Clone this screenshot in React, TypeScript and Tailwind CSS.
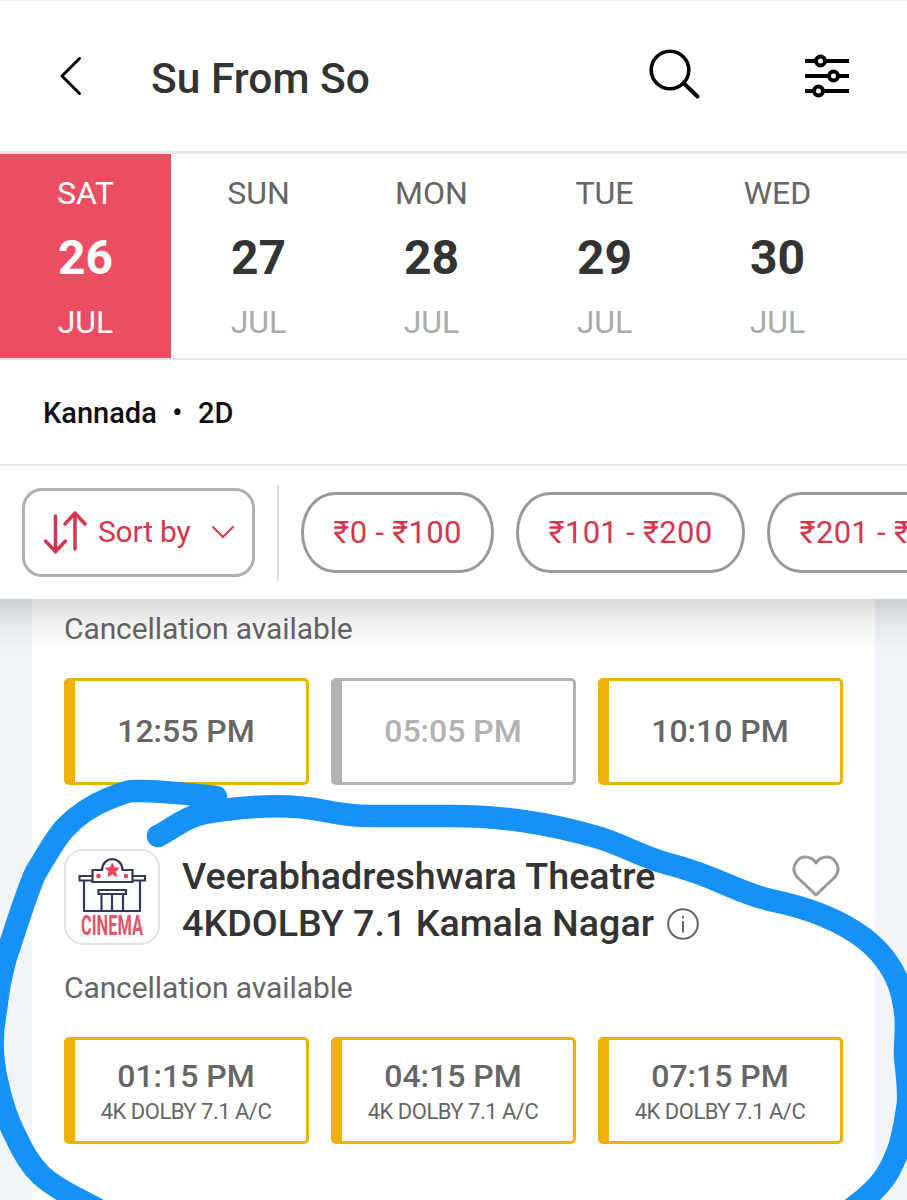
const days = [
  { day: "SAT", date: "26", month: "JUL" },
  { day: "SUN", date: "27", month: "JUL" },
  { day: "MON", date: "28", month: "JUL" },
  { day: "TUE", date: "29", month: "JUL" },
  { day: "WED", date: "30", month: "JUL" },
];

const prices = [
  { label: "₹0 - ₹100", width: "w-[193px]" },
  { label: "₹101 - ₹200", width: "w-[229px]" },
  { label: "₹201 - ₹300", width: "w-[229px]" },
];

const Header = () => {
  return (
    <header className="flex h-[154px] items-center border-t border-b-[3px] border-t-[#f0f0f0] border-b-[#e6e6e6]">
      <svg className="ml-[58px] h-[44px] w-[26px]" viewBox="0 0 26 44" fill="none" stroke="#000" strokeWidth="3" strokeLinecap="round" strokeLinejoin="round">
        <path d="M21.500 4.500L4 22L21.500 39.500" />
      </svg>
      <h1 className="mt-[7px] ml-[67px] text-[42.500px] leading-none font-medium text-[#333]">Su From So</h1>
      <svg className="mr-[104px] mb-[5px] ml-auto h-[54px] w-[54px]" viewBox="0 0 54 54" fill="none" stroke="#000">
        <circle cx="23" cy="23" r="18.800" strokeWidth="3.600" />
        <path d="M36.500 36L50.500 49.500" strokeWidth="4" strokeLinecap="round" />
      </svg>
      <svg className="mr-[58px] h-[46px] w-[44px]" viewBox="0 0 44 46" fill="#fff" stroke="#000" strokeWidth="4">
        <path d="M0 8H44M0 23H44M0 38H44" />
        <circle cx="15.500" cy="8" r="4.500" />
        <circle cx="28.500" cy="23" r="4.500" />
        <circle cx="13.500" cy="38" r="4.500" />
      </svg>
    </header>
  );
};

const DateStrip = () => {
  return (
    <div className="flex h-[206px] border-b-2 border-[#e4e4e4]">
      {days.map((d, i) => (
        <div
          key={d.date}
          className={`mr-[2px] flex h-[203.500px] w-[171px] shrink-0 flex-col items-center pt-[19px] leading-[40px] ${i === 0 ? "bg-[#eb4e62] text-white" : "text-[#666]"}`}
        >
          <p className="text-[32px]">{d.day}</p>
          <p className={`mt-[19px] text-[48px] leading-[52px] font-bold ${i === 0 ? "" : "text-[#333]"}`}>{d.date}</p>
          <p className={`mt-[18px] text-[32px] ${i === 0 ? "" : "text-[#aaa]"}`}>{d.month}</p>
        </div>
      ))}
    </div>
  );
};

const Filters = () => {
  return (
    <div className="flex h-[133px] items-center overflow-hidden">
      <button className="ml-[22px] flex h-[89px] w-[233px] shrink-0 items-center rounded-[20px] border-[3px] border-[#b0b0b0] pb-[2px] pl-[17px] text-[#d3374e]">
        <svg className="h-[46px] w-[46px]" viewBox="0 0 46 46" fill="none" stroke="currentColor" strokeWidth="3.500" strokeLinecap="round" strokeLinejoin="round">
          <path d="M13.500 7V43M3.500 32L13.500 42.500L23.500 32M33 40V4M23 15L33 4L43 15" />
        </svg>
        <span className="ml-[10px] text-[30px] tracking-[-0.2px]">Sort by</span>
        <svg className="ml-[20px] h-[14px] w-[24px]" viewBox="0 0 24 14" fill="none" stroke="currentColor" strokeWidth="2" strokeLinecap="round">
          <path d="M2 2L12 12L22 2" />
        </svg>
      </button>
      <div className="mr-[22px] ml-[22px] h-[96px] w-[2px] shrink-0 bg-[#e2e2e2]"></div>
      <div className="flex shrink-0 gap-[22px]">
        {prices.map((p) => (
          <button
            key={p.label}
            className={`h-[81px] shrink-0 rounded-[34px/40px] border-[3px] border-[#999] pt-[2px] text-[31px] tracking-[0.3px] whitespace-nowrap text-[#d3374e] ${p.width}`}
          >
            {p.label}
          </button>
        ))}
      </div>
    </div>
  );
};

const Showtime = ({ time, info, disabled }: { time: string; info?: string; disabled?: boolean }) => {
  return (
    <button
      className={`flex h-[107px] w-[245px] flex-col items-center justify-center rounded-[5px] border-[3px] border-l-[11px] pr-[9px] ${info ? "pt-[5px]" : "pb-px"} ${disabled ? "border-[#b2b2b2] text-[#b2b2b2]" : "border-[#efb008] text-[#666]"}`}
    >
      <span className="text-[32px] leading-[38px] font-medium">{time}</span>
      {info && <span className="text-[22px] leading-[34px] tracking-[-0.5px] whitespace-nowrap">{info}</span>}
    </button>
  );
};

const CinemaLogo = () => {
  return (
    <svg className="h-[96px] w-[96px] shrink-0" viewBox="64 849 96 96" fill="none" stroke="#333957" strokeWidth="2.200">
      <rect x="65" y="850" width="94" height="94" rx="18" fill="#fff" stroke="#e2e2e2" strokeWidth="1.800" />
      <path d="M84 881V911H140V881" />
      <path d="M79.500 876H145V880.500H79.500Z" />
      <path d="M92.500 882V870H102C102.500 855.500 122 855.500 122.500 870H132.500V882Z" fill="#fff" />
      <path d="M98.500 890H126V894H98.500ZM101.500 894V911M112 894V911M123 894V911" />
      <path d="M112.300 863.500L114.200 867.800L119 868.200L115.500 871.500L116.500 876.500L112.300 874L108 876.500L109 871.500L105.500 868.200L110.300 867.800Z" fill="#e5455b" stroke="#e5455b" strokeWidth="1" />
      <circle cx="98.500" cy="876" r="2.300" fill="#e5455b" stroke="none" />
      <circle cx="126" cy="876" r="2.300" fill="#e5455b" stroke="none" />
      <text x="81" y="934.500" fontSize="28" fontWeight="700" fill="#e0556a" stroke="none" textLength="62" lengthAdjust="spacingAndGlyphs">CINEMA</text>
    </svg>
  );
};

const Marker = () => {
  return (
    <svg className="pointer-events-none absolute top-0 left-0 h-[1200px] w-[907px]" viewBox="0 0 907 1200" fill="none" stroke="#1591f7" strokeWidth="22.500" strokeLinecap="round" strokeLinejoin="round">
      <path d="M216 797C185 794 160 790 134 791C126 791 118 795 110 798C90 806 76 816 64 829C53 842 46 856 36 872C28 888 15 930 6 957C1 975 -2 990 -4 1010C-9 1035 -8 1060 -3 1081C2 1105 7 1120 16 1137C32 1172 45 1182 78 1199L110 1216" />
      <path d="M158 836C175 827 185 817 205 813C250 805 290 804 325 811C345 815 355 816 370 816H450C500 816 545 822 600 838C625 846 643 857 665 863C720 877 730 890 770 900C805 907 840 920 865 939C885 955 900 976 904 1005C908 1022 905 1035 905 1055C906 1070 909 1085 908 1103C906 1120 904 1130 900 1145C892 1168 885 1182 863 1200L845 1214" />
    </svg>
  );
};

const App = () => {
  return (
    <div className="relative h-[1200px] w-[907px] overflow-hidden bg-[#f1f4f9] font-[Roboto,sans-serif]">
      <div className="bg-white">
        <Header />
        <DateStrip />
        <div className="flex h-[106px] items-center gap-[15.500px] border-b-2 border-[#e6e6e6] pt-[3px] pl-[43px] text-[29px] font-medium text-[#111]">
          <span>Kannada</span>
          <span>•</span>
          <span>2D</span>
        </div>
        <Filters />
      </div>
      <main className="mx-[32px] h-[601px] bg-white px-[32px] pt-[11px]">
        <p className="text-[30px] leading-[37px] tracking-[-0.1px] text-[#666]">Cancellation available</p>
        <div className="mt-[31px] flex gap-[22px]">
          <Showtime time="12:55 PM" />
          <Showtime time="05:05 PM" disabled />
          <Showtime time="10:10 PM" />
        </div>
        <div className="mt-[64px] flex">
          <CinemaLogo />
          <h2 className="ml-[22px] h-[98px] pt-[4px] text-[37.650px] leading-[47px] font-medium whitespace-nowrap text-[#333]">
            Veerabhadreshwara Theatre
            <br />
            <span className="flex items-center gap-[13px]">
              4KDOLBY 7.1 Kamala Nagar
              <svg className="h-[32px] w-[32px]" viewBox="0 0 32 32" fill="none" stroke="#666" strokeWidth="2">
                <circle cx="16" cy="16" r="14.800" />
                <path d="M16 13V24.500M16 8V10.500" />
              </svg>
            </span>
          </h2>
          <svg className="mt-[5px] mr-[3px] ml-auto h-[44px] w-[48px]" viewBox="0 0 48 44" fill="none" stroke="#999" strokeWidth="3" strokeLinejoin="round">
            <path d="M24 9C20 2 10 1 5 7C1 12 1 18 5 23L24 41L43 23C47 18 47 12 43 7C38 1 28 2 24 9Z" />
          </svg>
        </div>
        <p className="mt-[22px] text-[30px] leading-[37px] tracking-[-0.1px] text-[#666]">Cancellation available</p>
        <div className="mt-[31px] flex gap-[22px]">
          <Showtime time="01:15 PM" info="4K DOLBY 7.1 A/C" />
          <Showtime time="04:15 PM" info="4K DOLBY 7.1 A/C" />
          <Showtime time="07:15 PM" info="4K DOLBY 7.1 A/C" />
        </div>
      </main>
      <div className="absolute top-[599px] left-0 h-[52px] w-full bg-linear-to-b from-black/15 via-black/5 to-transparent"></div>
      <Marker />
    </div>
  );
};

export default App;
